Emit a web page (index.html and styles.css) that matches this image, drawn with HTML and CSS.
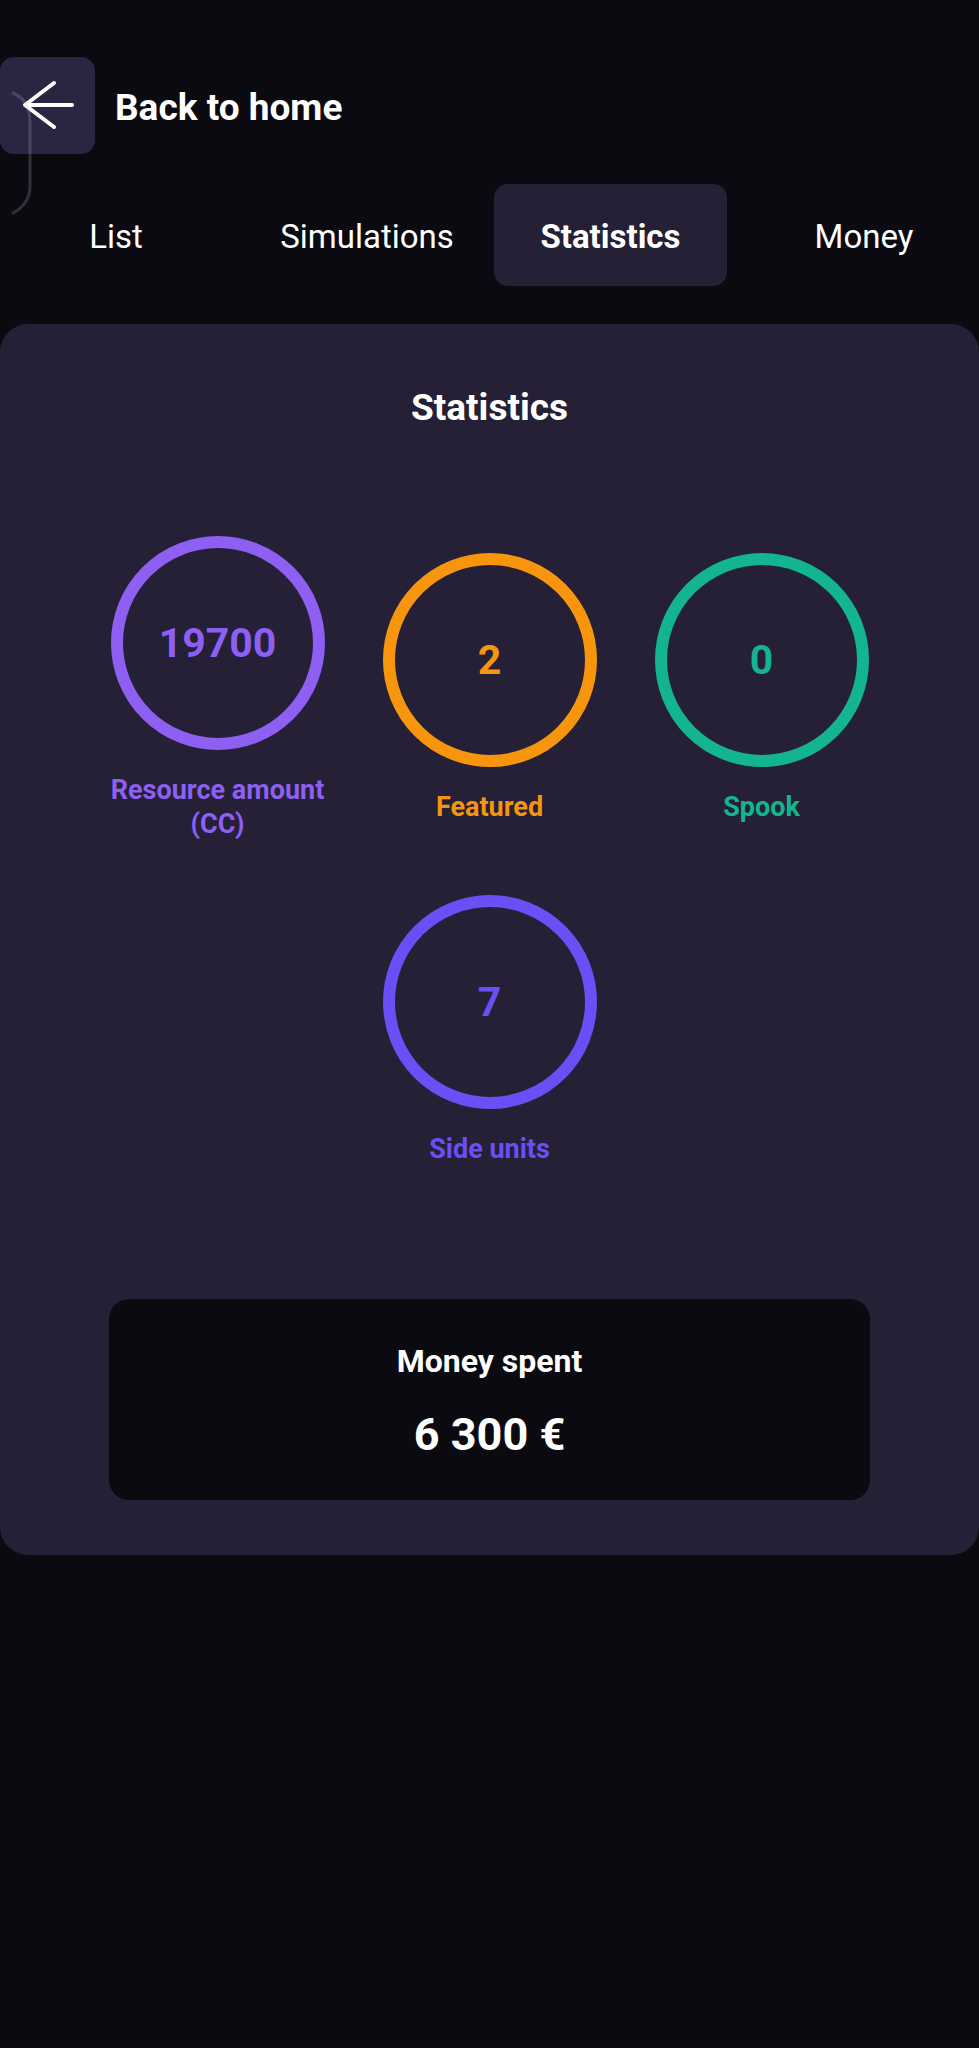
FILE: index.html
```html
<!DOCTYPE html>
<html lang="en">
<head>
<meta charset="utf-8">
<title>Statistics</title>
<link rel="stylesheet" href="styles.css">
</head>
<body>
<svg class="edge-hint" width="40" height="230" viewBox="0 0 40 230" aria-hidden="true">
  <path d="M13 93 Q30 100 30 122 L30 186 Q30 204 13 213" fill="none" stroke="rgba(190,185,210,0.22)" stroke-width="3" stroke-linecap="round"/>
</svg>
<header class="header">
  <button class="back-btn" aria-label="Back">
    <svg width="95" height="97" viewBox="0 0 95 97">
      <path d="M72 48 H25 M54 26 L25 48 L54 70" fill="none" stroke="#ffffff" stroke-width="4" stroke-linecap="round" stroke-linejoin="round"/>
    </svg>
  </button>
  <span class="back-text">Back to home</span>
</header>

<nav class="tabs">
  <div class="tab first">List</div>
  <div class="tab">Simulations</div>
  <div class="tab active">Statistics</div>
  <div class="tab">Money</div>
</nav>

<section class="card">
  <h2 class="card-title">Statistics</h2>
  <div class="stats">
    <div class="stat purple">
      <div class="ring"><span class="num">19700</span></div>
      <div class="label">Resource amount<br>(CC)</div>
    </div>
    <div class="stat orange">
      <div class="ring"><span class="num">2</span></div>
      <div class="label">Featured</div>
    </div>
    <div class="stat teal">
      <div class="ring"><span class="num">0</span></div>
      <div class="label">Spook</div>
    </div>
    <div class="stat violet">
      <div class="ring"><span class="num">7</span></div>
      <div class="label">Side units</div>
    </div>
  </div>
  <div class="money">
    <div class="money-label">Money spent</div>
    <div class="money-value">6 300 €</div>
  </div>
</section>
</body>
</html>
```
FILE: styles.css
```css
* { box-sizing: border-box; }

html, body {
  margin: 0;
  padding: 0;
  background: #0b0a10;
  color: #ffffff;
  font-family: Roboto, "Noto Sans", "Liberation Sans", sans-serif;
}

body {
  position: relative;
  min-height: 2048px;
}

.edge-hint {
  position: absolute;
  left: 0;
  top: 0;
  pointer-events: none;
  z-index: 2;
}

.header {
  display: flex;
  align-items: center;
  gap: 20px;
  padding-top: 57px;
}

.back-btn {
  width: 95px;
  height: 97px;
  padding: 0;
  border: none;
  border-radius: 14px;
  background: #2a2540;
  display: block;
}

.back-btn svg { display: block; }

.back-text {
  font-size: 37px;
  font-weight: 700;
  line-height: 43px;
  margin-top: 4px;
}

.tabs {
  display: grid;
  grid-template-columns: 240px 210px 233px 1fr;
  column-gap: 22px;
  margin-top: 30px;
}

.tab {
  height: 102px;
  padding-top: 3px;
  display: flex;
  align-items: center;
  justify-content: center;
  font-size: 33px;
  font-weight: 400;
  border-radius: 14px;
}

.tab.first {
  padding-right: 8px;
}

.tab.active {
  background: #252036;
  font-weight: 700;
}

.card {
  margin-top: 38px;
  background: #252036;
  border-radius: 28px;
  padding: 62px 0 55px;
}

.card-title {
  margin: 0;
  text-align: center;
  font-size: 37px;
  font-weight: 700;
  line-height: 43px;
}

.stats {
  display: flex;
  flex-wrap: wrap;
  justify-content: center;
  align-items: center;
  row-gap: 54px;
  margin-top: 107px;
}

.stat {
  width: 272px;
  display: flex;
  flex-direction: column;
  align-items: center;
}

.ring {
  width: 214px;
  height: 214px;
  border-radius: 50%;
  border: 12px solid currentColor;
  display: flex;
  align-items: center;
  justify-content: center;
}

.num {
  font-size: 41px;
  font-weight: 700;
  line-height: 48px;
}

.label {
  margin-top: 23px;
  font-size: 27px;
  font-weight: 700;
  line-height: 34px;
  text-align: center;
}

.purple { color: #8d5ff2; }
.orange { color: #f7950d; }
.teal { color: #13b590; }
.violet { color: #6b4ef6; }

.money {
  margin: 133px 109px 0;
  background: #0b0a10;
  border-radius: 20px;
  padding: 44px 0 39px;
  text-align: center;
}

.money-label {
  font-size: 32px;
  font-weight: 700;
  line-height: 37px;
}

.money-value {
  margin-top: 28px;
  font-size: 45px;
  font-weight: 700;
  line-height: 53px;
}
```
